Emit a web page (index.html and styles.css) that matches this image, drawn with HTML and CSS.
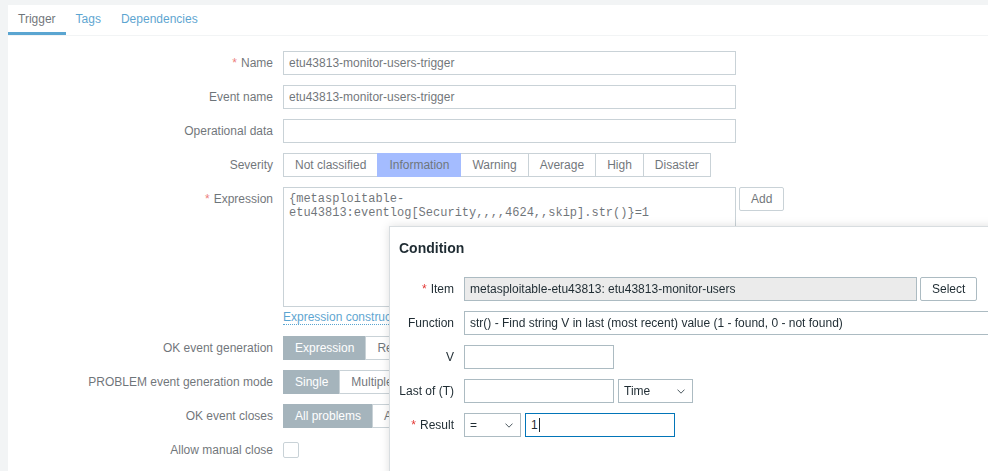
FILE: index.html
```html
<!DOCTYPE html>
<html lang="en">
<head>
<meta charset="utf-8">
<title>Trigger</title>
<link rel="stylesheet" href="styles.css">
</head>
<body>
<div class="page">
  <div class="tabs">
    <span class="tab active">Trigger</span>
    <span class="tab">Tags</span>
    <span class="tab">Dependencies</span>
  </div>
  <div class="form">
    <div class="lbl req">Name</div>
    <div class="field"><input class="txt w453" type="text" value="etu43813-monitor-users-trigger"></div>

    <div class="lbl">Event name</div>
    <div class="field"><input class="txt w453" type="text" value="etu43813-monitor-users-trigger"></div>

    <div class="lbl">Operational data</div>
    <div class="field"><input class="txt w453" type="text" value=""></div>

    <div class="lbl">Severity</div>
    <div class="field">
      <div class="seg">
        <span>Not classified</span><span class="info">Information</span><span>Warning</span><span>Average</span><span>High</span><span>Disaster</span>
      </div>
    </div>

    <div class="lbl req">Expression</div>
    <div class="field">
      <div class="expr-row">
        <textarea class="expr" spellcheck="false">{metasploitable-
etu43813:eventlog[Security,,,,4624,,skip].str()}=1</textarea>
        <span class="btn">Add</span>
      </div>
      <div class="link-row"><span class="link">Expression constructor</span></div>
    </div>

    <div class="lbl">OK event generation</div>
    <div class="field">
      <div class="seg"><span class="on">Expression</span><span>Recovery expression</span><span>None</span></div>
    </div>

    <div class="lbl">PROBLEM event generation mode</div>
    <div class="field">
      <div class="seg"><span class="on">Single</span><span>Multiple</span></div>
    </div>

    <div class="lbl">OK event closes</div>
    <div class="field">
      <div class="seg"><span class="on">All problems</span><span>All problems if tag values match</span></div>
    </div>

    <div class="lbl">Allow manual close</div>
    <div class="field check-field"><span class="checkbox"></span></div>
  </div>
</div>

<div class="overlay"></div>

<div class="dialog">
  <div class="dlg-head">Condition</div>
  <div class="dlg-body">
    <div class="dlbl req">Item</div>
    <div class="dfield">
      <input class="txt w453 ro" type="text" value="metasploitable-etu43813: etu43813-monitor-users" readonly>
      <span class="btn dark">Select</span>
    </div>

    <div class="dlbl">Function</div>
    <div class="dfield">
      <div class="sel w600"><span>str() - Find string V in last (most recent) value (1 - found, 0 - not found)</span></div>
    </div>

    <div class="dlbl">V</div>
    <div class="dfield"><input class="txt w150" type="text" value=""></div>

    <div class="dlbl">Last of (T)</div>
    <div class="dfield">
      <input class="txt w150" type="text" value="">
      <div class="sel w75 gap4"><span>Time</span><svg class="chev" width="8" height="5" viewBox="0 0 8 5"><path d="M0.5 0.6 L4 4.2 L7.5 0.6" fill="none" stroke="#4f5b62" stroke-width="1"/></svg></div>
    </div>

    <div class="dlbl req">Result</div>
    <div class="dfield">
      <div class="sel w57"><span>=</span><svg class="chev" width="8" height="5" viewBox="0 0 8 5"><path d="M0.5 0.6 L4 4.2 L7.5 0.6" fill="none" stroke="#4f5b62" stroke-width="1"/></svg></div>
      <div class="txt w150 gap4 focus"><span>1</span><span class="caret"></span></div>
    </div>
  </div>
</div>
</body>
</html>
```

FILE: styles.css
```css
* { box-sizing: border-box; }

html, body {
  margin: 0;
  padding: 0;
  height: 100%;
}

body {
  background: #ebeef0;
  font-family: "Liberation Sans", Arial, sans-serif;
  font-size: 12px;
  color: #1f2c33;
  overflow: hidden;
}

.page {
  margin: 5px 0 0 8px;
  background: #fff;
  height: 480px;
}

/* tabs */
.tabs {
  display: flex;
  height: 31px;
  border-bottom: 1px solid #ebeef0;
}

.tab {
  padding: 0 10px;
  height: 30px;
  line-height: 28px;
  color: #0275b8;
  border-bottom: 3px solid transparent;
}

.tab.active {
  color: #1f2c33;
  border-bottom-color: #0275b8;
}

/* form */
.form {
  display: grid;
  grid-template-columns: 265px auto;
  column-gap: 10px;
  row-gap: 10px;
  padding-top: 15px;
  align-items: start;
}

.lbl {
  text-align: right;
  line-height: 24px;
  white-space: nowrap;
}

.req::before {
  content: "*";
  color: #e33734;
  margin-right: 4px;
}

.field {
  display: flex;
  flex-direction: column;
  align-items: flex-start;
}

.txt {
  height: 24px;
  border: 1px solid #acbbc2;
  background: #fff;
  font-family: "Liberation Sans", Arial, sans-serif;
  font-size: 12px;
  color: #1f2c33;
  padding: 0 5px;
  margin: 0;
  outline: none;
  border-radius: 0;
}

.w453 { width: 453px; }
.w150 { width: 150px; }
.w75 { width: 75px; }
.w57 { width: 57px; }
.w600 { width: 600px; }
.gap4 { margin-left: 4px; }

.seg {
  display: flex;
}

.seg span {
  height: 24px;
  line-height: 22px;
  padding: 0 11px;
  border: 1px solid #acbbc2;
  margin-left: -1px;
  background: #fff;
  white-space: nowrap;
}

.seg span:first-child {
  margin-left: 0;
}

.seg span.info {
  background: #7499ff;
  border-color: #7499ff;
  position: relative;
}

.seg span.on {
  background: #768d99;
  border-color: #768d99;
  color: #fff;
}

.expr-row {
  display: flex;
  align-items: flex-start;
}

.expr {
  width: 453px;
  height: 120px;
  border: 1px solid #acbbc2;
  font-family: "Liberation Mono", "Courier New", monospace;
  font-size: 12px;
  line-height: 14px;
  color: #1f2c33;
  padding: 4px 5px;
  margin: 0;
  resize: none;
  outline: none;
  overflow: hidden;
  display: block;
}

.btn {
  height: 24px;
  line-height: 22px;
  padding: 0 11px;
  border: 1px solid #acbbc2;
  border-radius: 2px;
  background: #fff;
  color: #1f2c33;
  margin-left: 3px;
  white-space: nowrap;
}

.link-row {
  margin-top: 4px;
  height: 15px;
  line-height: 13px;
}

.link {
  color: #0275b8;
  border-bottom: 1px dotted #0275b8;
}

.check-field {
  height: 24px;
  justify-content: center;
}

.checkbox {
  display: block;
  width: 16px;
  height: 16px;
  border: 1px solid #acbbc2;
  border-radius: 2px;
  background: #fff;
}

/* overlay + dialog */
.overlay {
  position: fixed;
  inset: 0;
  background: rgba(255, 255, 255, 0.35);
}

.dialog {
  position: absolute;
  left: 389px;
  top: 226px;
  width: 720px;
  height: 320px;
  background: #fff;
  border: 1px solid #d8dde0;
  box-shadow: 0 0 9px rgba(0, 0, 0, 0.13);
}

.dlg-head {
  padding: 12px 9px 0 9px;
  height: 50px;
  font-size: 14px;
  font-weight: bold;
  line-height: 18px;
  color: #1f2c33;
}

.dlg-body {
  display: grid;
  grid-template-columns: 55px auto;
  column-gap: 10px;
  row-gap: 10px;
  padding: 0 9px;
  align-items: start;
}

.dlbl {
  text-align: right;
  line-height: 24px;
  white-space: nowrap;
}

.dfield {
  display: flex;
  align-items: flex-start;
}

.ro {
  background: #ebebeb;
}

.sel {
  height: 24px;
  border: 1px solid #acbbc2;
  background: #fff;
  padding: 0 7px 0 5px;
  display: flex;
  align-items: center;
  justify-content: space-between;
  white-space: nowrap;
  overflow: hidden;
}

.chev {
  flex: none;
  margin-left: 4px;
}

.focus {
  display: flex;
  align-items: center;
  border-color: #0275b8;
}

.caret {
  display: inline-block;
  width: 1px;
  height: 14px;
  background: #1f2c33;
  margin-left: 1px;
}
```
